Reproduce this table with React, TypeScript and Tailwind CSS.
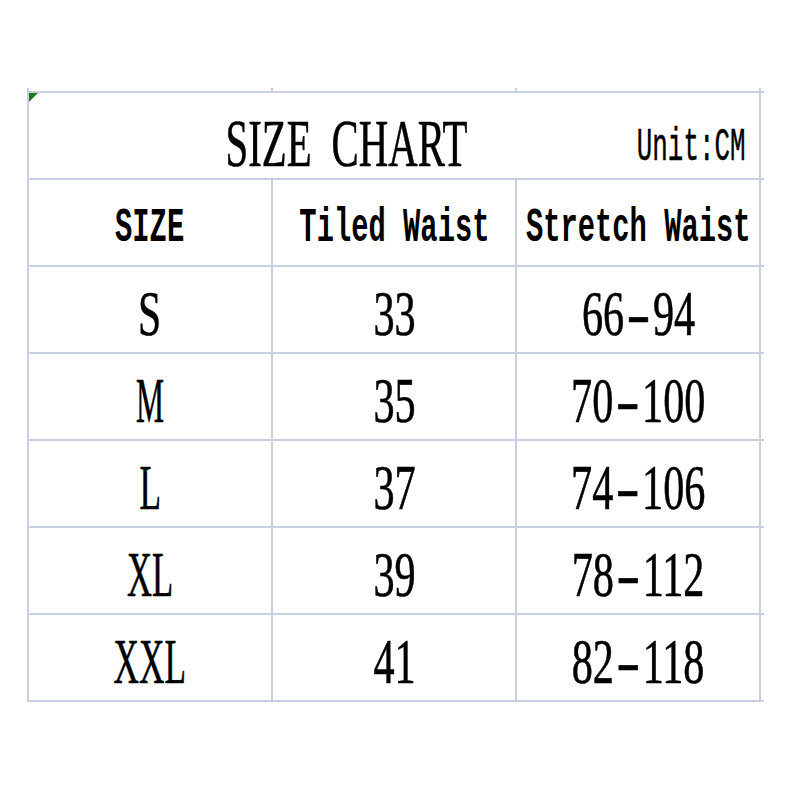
const rows = [
  { size: 'S', sizeScale: 'scale-x-[0.66]', tiled: '33', stretch: '66-94' },
  { size: 'M', sizeScale: 'scale-x-[0.5]', tiled: '35', stretch: '70-100' },
  { size: 'L', sizeScale: 'scale-x-[0.56]', tiled: '37', stretch: '74-106' },
  { size: 'XL', sizeScale: 'scale-x-[0.55]', tiled: '39', stretch: '78-112' },
  { size: 'XXL', sizeScale: 'scale-x-[0.56]', tiled: '41', stretch: '82-118' },
];

const serif = "font-['Liberation_Serif',serif] [-webkit-text-stroke:0.6px_black]";
const mono = "font-['Liberation_Mono',monospace]";

function Range({ value }: { value: string }) {
  const [a, b] = value.split('-');
  return (
    <span className={`inline-block ${serif} text-[63px] leading-none text-black whitespace-nowrap scale-x-[0.67]`}>
      {a}
      <span className="inline-block mx-[11px] scale-x-[1.7]">-</span>
      {b}
    </span>
  );
}

export default function App() {
  return (
    <div className="w-[800px] h-[800px] bg-white pt-[88px] pl-[27px]">
      {/* little stubs of the sheet's grid above the table */}
      <div className="grid grid-cols-[246px_244px_244px_3px] h-[3px]">
        <div className="border-l-2 border-r-2 border-[#c9cfe3]" />
        <div className="border-r-2 border-[#c9cfe3]" />
        <div className="border-r-2 border-[#c9cfe3]" />
        <div />
      </div>
      <div className="w-[737px] h-[2px] bg-[#c9cfe3]" />

      {/* title row */}
      <div className="grid grid-cols-[734px_3px] h-[87px] w-[737px] border-b-2 border-[#c9cfe3]">
        <div className="relative flex items-center border-l-2 border-r-2 border-[#c9cfe3]">
          <svg className="absolute left-0 top-0" width="9" height="9" viewBox="0 0 9 9">
            <polygon points="0,0 9,0 0,9" fill="#1d7a1d" />
          </svg>
          <div className="w-[600px] shrink-0 pl-[35px] flex justify-center mt-[14px]">
            <span
              className={`inline-block ${serif} text-[68px] leading-none text-black whitespace-nowrap [word-spacing:16px] scale-x-[0.6]`}
            >
              SIZE CHART
            </span>
          </div>
          <div className="ml-auto w-[121px] shrink-0 pr-[14px] flex justify-end mt-[24px]">
            <span
              className={`inline-block ${mono} text-[47px] leading-none text-black whitespace-nowrap origin-right scale-x-[0.55] [-webkit-text-stroke:0.5px_black]`}
            >
              Unit:CM
            </span>
          </div>
        </div>
        <div />
      </div>

      {/* header row */}
      <div className="grid grid-cols-[246px_244px_244px_3px] h-[87px] w-[737px] border-b-2 border-[#c9cfe3]">
        {['SIZE', 'Tiled Waist', 'Stretch Waist'].map((label, i) => (
          <div
            key={label}
            className={`flex items-center justify-center border-r-2 border-[#c9cfe3] ${i === 0 ? 'border-l-2' : ''}`}
          >
            <span
              className={`inline-block mt-[10px] ${mono} font-bold text-[48px] leading-none text-black whitespace-nowrap scale-x-[0.6]`}
            >
              {label}
            </span>
          </div>
        ))}
        <div />
      </div>

      {/* size rows */}
      {rows.map((row) => (
        <div
          key={row.size}
          className="grid grid-cols-[246px_244px_244px_3px] h-[87px] w-[737px] border-b-2 border-[#c9cfe3]"
        >
          <div className="flex items-center justify-center border-l-2 border-r-2 border-[#c9cfe3]">
            <span className={`inline-block mt-[10px] ${serif} text-[63px] leading-none text-black ${row.sizeScale}`}>
              {row.size}
            </span>
          </div>
          <div className="flex items-center justify-center border-r-2 border-[#c9cfe3]">
            <span className={`inline-block mt-[10px] ${serif} text-[63px] leading-none text-black scale-x-[0.67]`}>
              {row.tiled}
            </span>
          </div>
          <div className="flex items-center justify-center border-r-2 border-[#c9cfe3] pt-[10px]">
            <Range value={row.stretch} />
          </div>
          <div />
        </div>
      ))}
    </div>
  );
}
